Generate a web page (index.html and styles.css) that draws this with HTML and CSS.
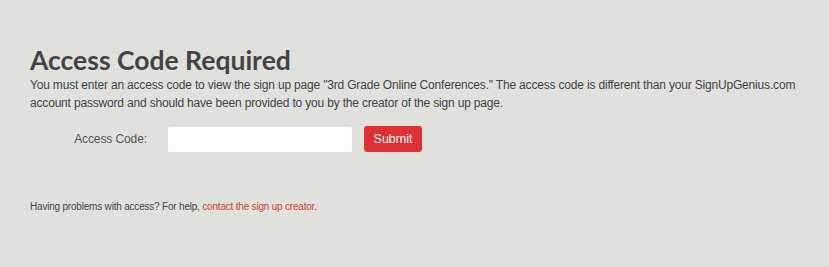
FILE: index.html
```html
<!DOCTYPE html>
<html lang="en">
<head>
    <meta charset="UTF-8">
    <title>Access Code Required</title>
    <link rel="stylesheet" href="styles.css">
</head>
<body>
    <!-- access code page -->
    <div class="page">
        <h1>Access Code Required</h1>
        <p class="intro">You must enter an access code to view the sign up page "3rd Grade Online Conferences." The access code is different than your SignUpGenius.com account password and should have been provided to you by the creator of the sign up page.</p>

        <form class="code-form" onsubmit="return false;">
            <label for="access-code">Access Code:</label>
            <input type="password" id="access-code">
            <button type="submit">Submit</button>
        </form>

        <p class="help">Having problems with access? For help, <a href="#">contact the sign up creator</a>.</p>
    </div>
</body>
</html>
```

FILE: styles.css
```css
/* page */
body {
    margin: 0;
    background-color: #e0e1dc;
    color: #444;
    font-family: 'Liberation Sans', Arial, sans-serif;
}

.page {
    padding: 44px 20px 0 30px;
}

h1 {
    font-family: 'Lato', sans-serif;
    font-weight: 700;
    font-size: 26.5px;
    line-height: 32px;
    color: #444;
    margin: 0;
}

.intro {
    font-size: 12px;
    letter-spacing: -0.18px;
    line-height: 18px;
    margin: 0;
}

/* form row */
.code-form {
    display: flex;
    align-items: center;
    margin-top: 14px;
}

.code-form label {
    width: 117px;
    text-align: right;
    font-size: 12px;
    letter-spacing: -0.1px;
    color: #555;
    margin-right: 21px;
}

.code-form input {
    width: 184px;
    height: 25px;
    box-sizing: border-box;
    border: none;
    border-radius: 2px;
    background-color: #fff;
    margin: 0;
    padding: 0 6px;
}

.code-form button {
    height: 26px;
    width: 58px;
    margin-left: 12px;
    border: none;
    border-radius: 3px;
    background-color: #e03034;
    color: #fff;
    font-family: 'Liberation Sans', Arial, sans-serif;
    font-size: 12.5px;
    cursor: pointer;
}

/* footer note */
.help {
    font-size: 10px;
    letter-spacing: -0.2px;
    margin: 49px 0 0 0;
    color: #444;
}

.help a {
    color: #d4402c;
    text-decoration: none;
}
```
